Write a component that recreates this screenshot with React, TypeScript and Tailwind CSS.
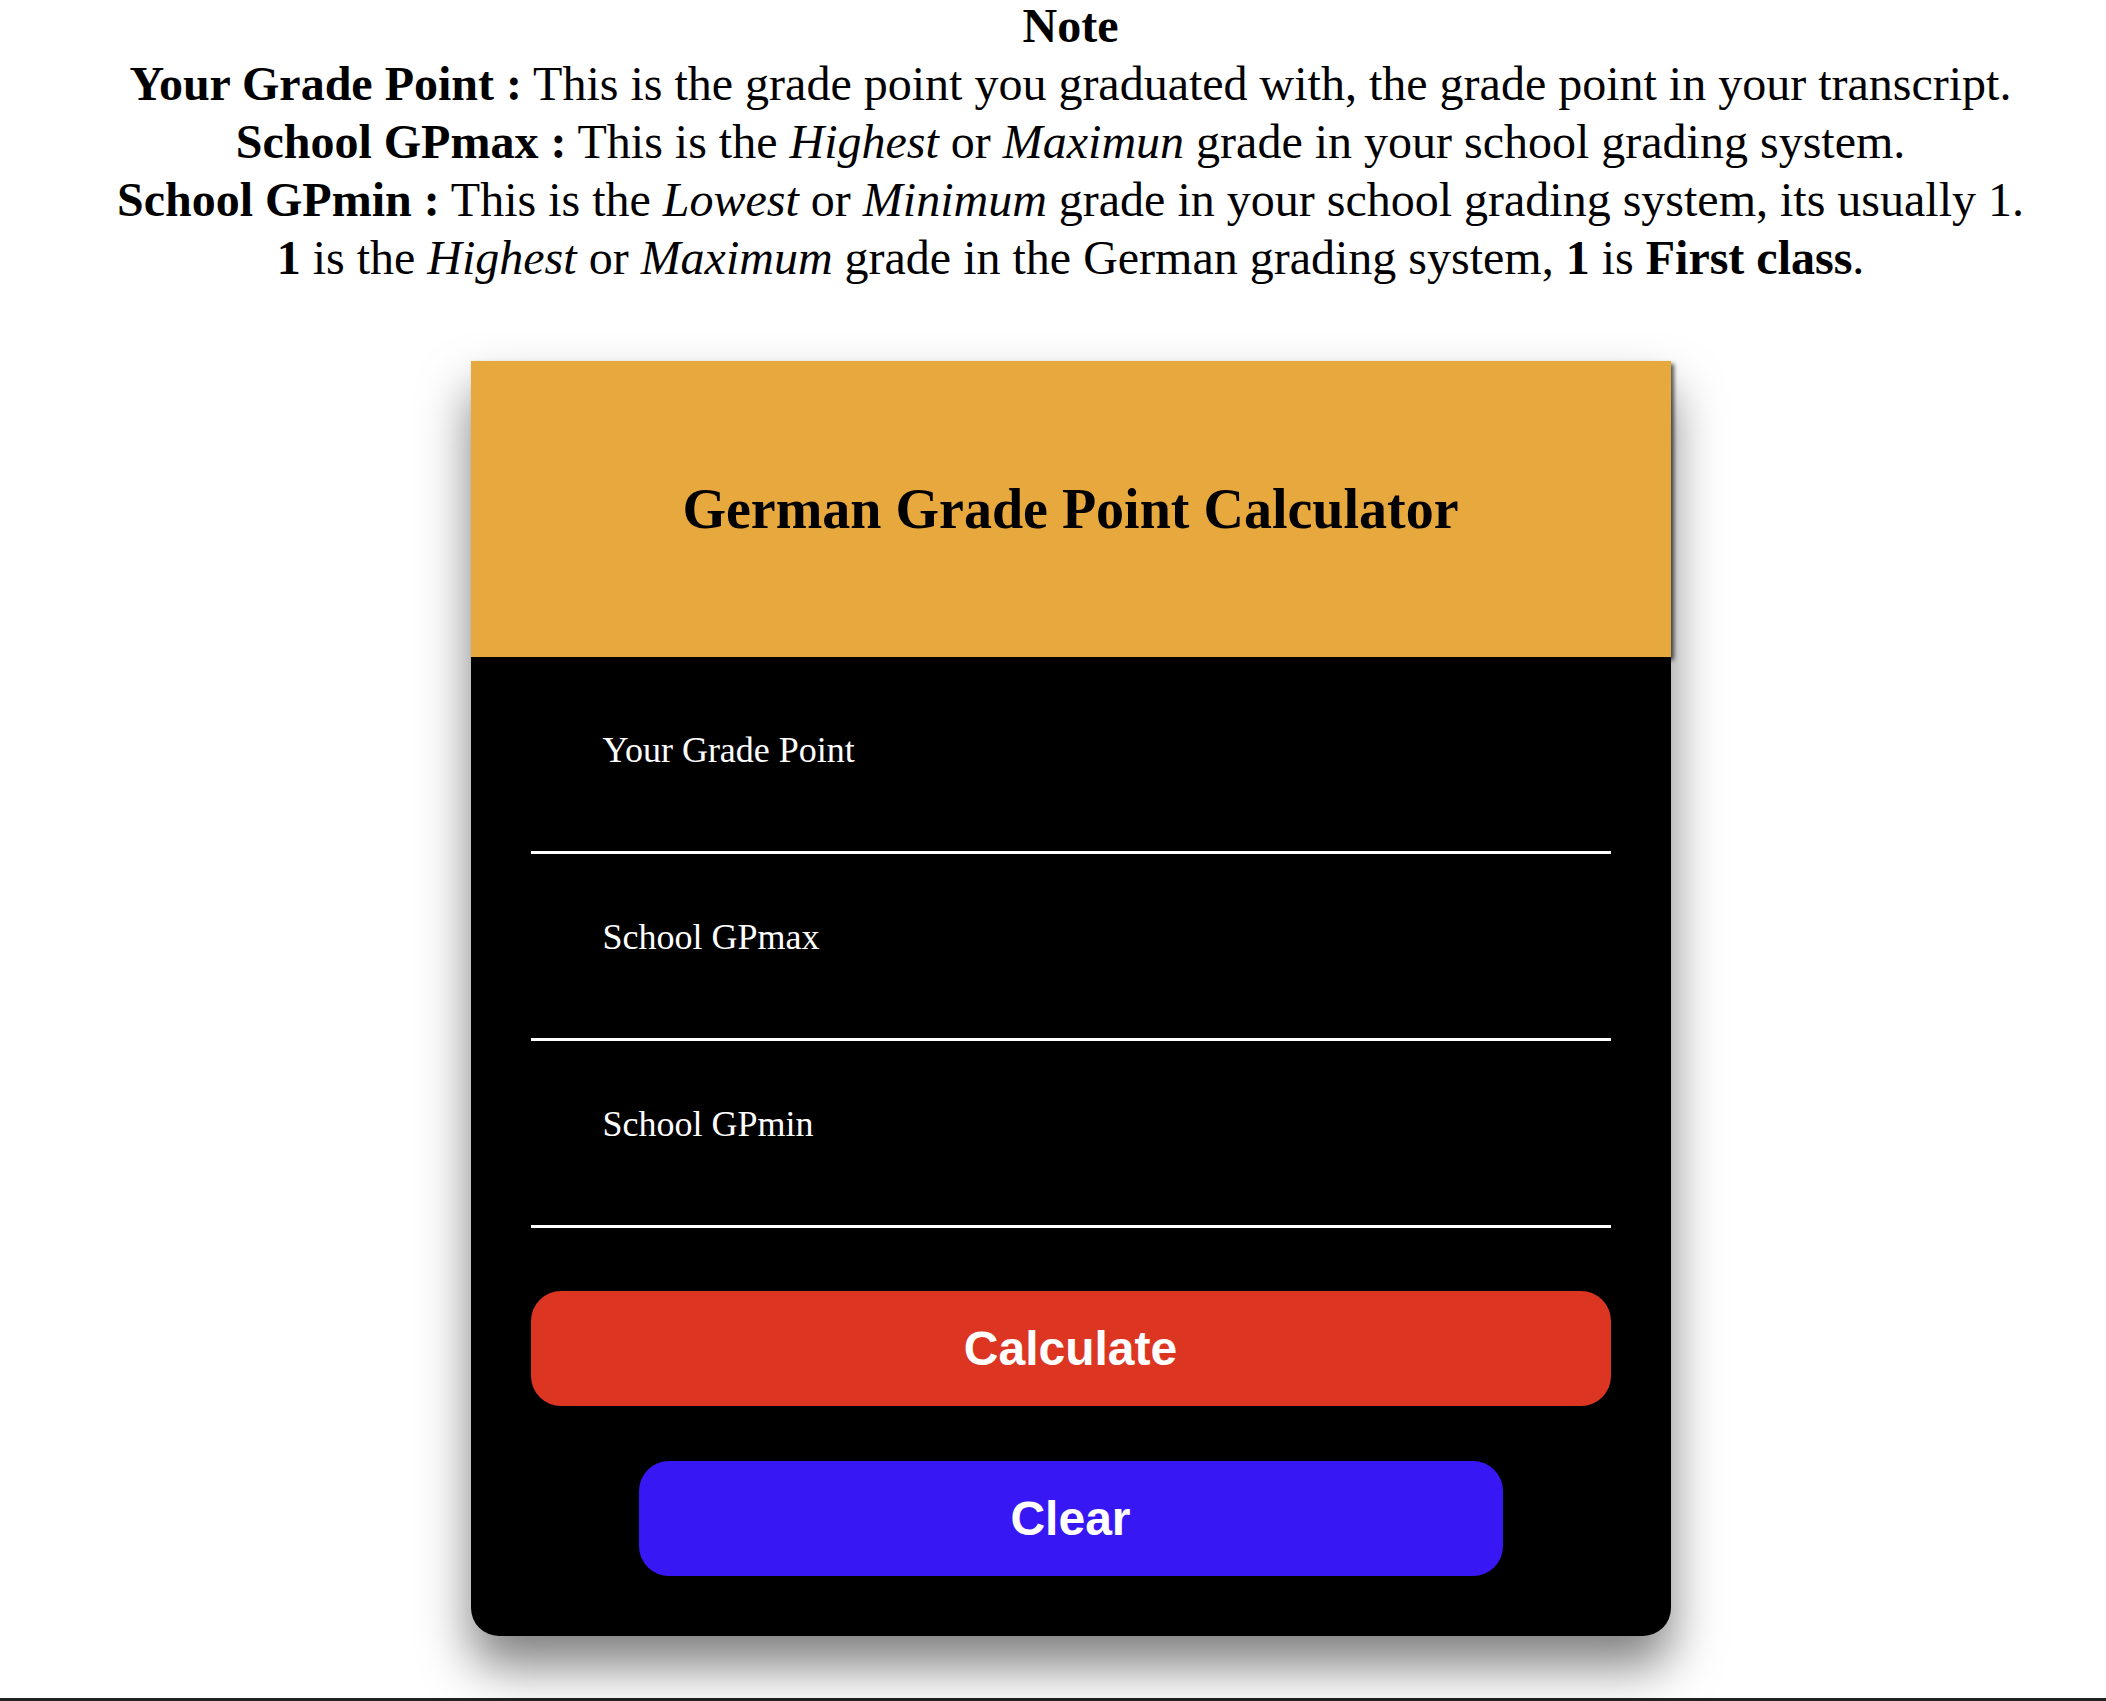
import React, { useState } from 'react';

const serif = { fontFamily: '"Liberation Serif", "Times New Roman", serif' };
const sans = { fontFamily: '"Liberation Sans", Arial, sans-serif' };

const FIELDS = [
  { key: 'gp', label: 'Your Grade Point' },
  { key: 'max', label: 'School GPmax' },
  { key: 'min', label: 'School GPmin' },
];

export default function App() {
  const [values, setValues] = useState<Record<string, string>>({ gp: '', max: '', min: '' });

  return (
    <div className="min-h-screen bg-white text-black pl-[35px]" style={serif}>
      {/* Note */}
      <div className="-mt-[3px] text-center text-[48px] leading-[58px]">
        <p className="font-bold">Note</p>
        <p>
          <b>Your Grade Point :</b> This is the grade point you graduated with, the grade point in your transcript.
        </p>
        <p>
          <b>School GPmax :</b> This is the <i>Highest</i> or <i>Maximun</i> grade in your school grading system.
        </p>
        <p>
          <b>School GPmin :</b> This is the <i>Lowest</i> or <i>Minimum</i> grade in your school grading system, its usually 1.
        </p>
        <p>
          <b>1</b> is the <i>Highest</i> or <i>Maximum</i> grade in the German grading system, <b>1</b> is <b>First class</b>.
        </p>
      </div>

      {/* Calculator card */}
      <div className="flex justify-center mt-[74px]">
        <div className="w-[1200px] bg-black rounded-b-[28px] shadow-[0_30px_50px_rgba(0,0,0,0.5)]">
          <div className="relative z-10 h-[296px] bg-[#e7a83d] flex items-center justify-center shadow-[3px_3px_4px_rgba(0,0,0,0.65)]">
            <h1 className="text-[56px] font-bold">German Grade Point Calculator</h1>
          </div>

          <div className="px-[60px] pt-[10px] pb-[60px]">
            {FIELDS.map((f) => (
              <label key={f.key} className="flex flex-col h-[187px] border-b-[3px] border-white pt-[64px] pl-[72px]">
                <span className="text-white text-[36px] leading-[39px]">{f.label}</span>
                <input
                  type="text"
                  value={values[f.key]}
                  onChange={(e) => setValues({ ...values, [f.key]: e.target.value })}
                  className="flex-1 bg-transparent text-white text-[35px] outline-none"
                />
              </label>
            ))}

            <button
              className="mt-[63px] w-full h-[115px] rounded-[30px] bg-[#dc3623] text-white text-[48px] font-bold"
              style={sans}
            >
              Calculate
            </button>
            <div className="flex justify-center mt-[55px]">
              <button
                onClick={() => setValues({ gp: '', max: '', min: '' })}
                className="w-[80%] h-[115px] rounded-[30px] bg-[#3718f5] text-white text-[48px] font-bold"
                style={sans}
              >
                Clear
              </button>
            </div>
          </div>
        </div>
      </div>

      <div className="mt-[62px] -ml-[35px] h-[40px] bg-[#222]" />
    </div>
  );
}
